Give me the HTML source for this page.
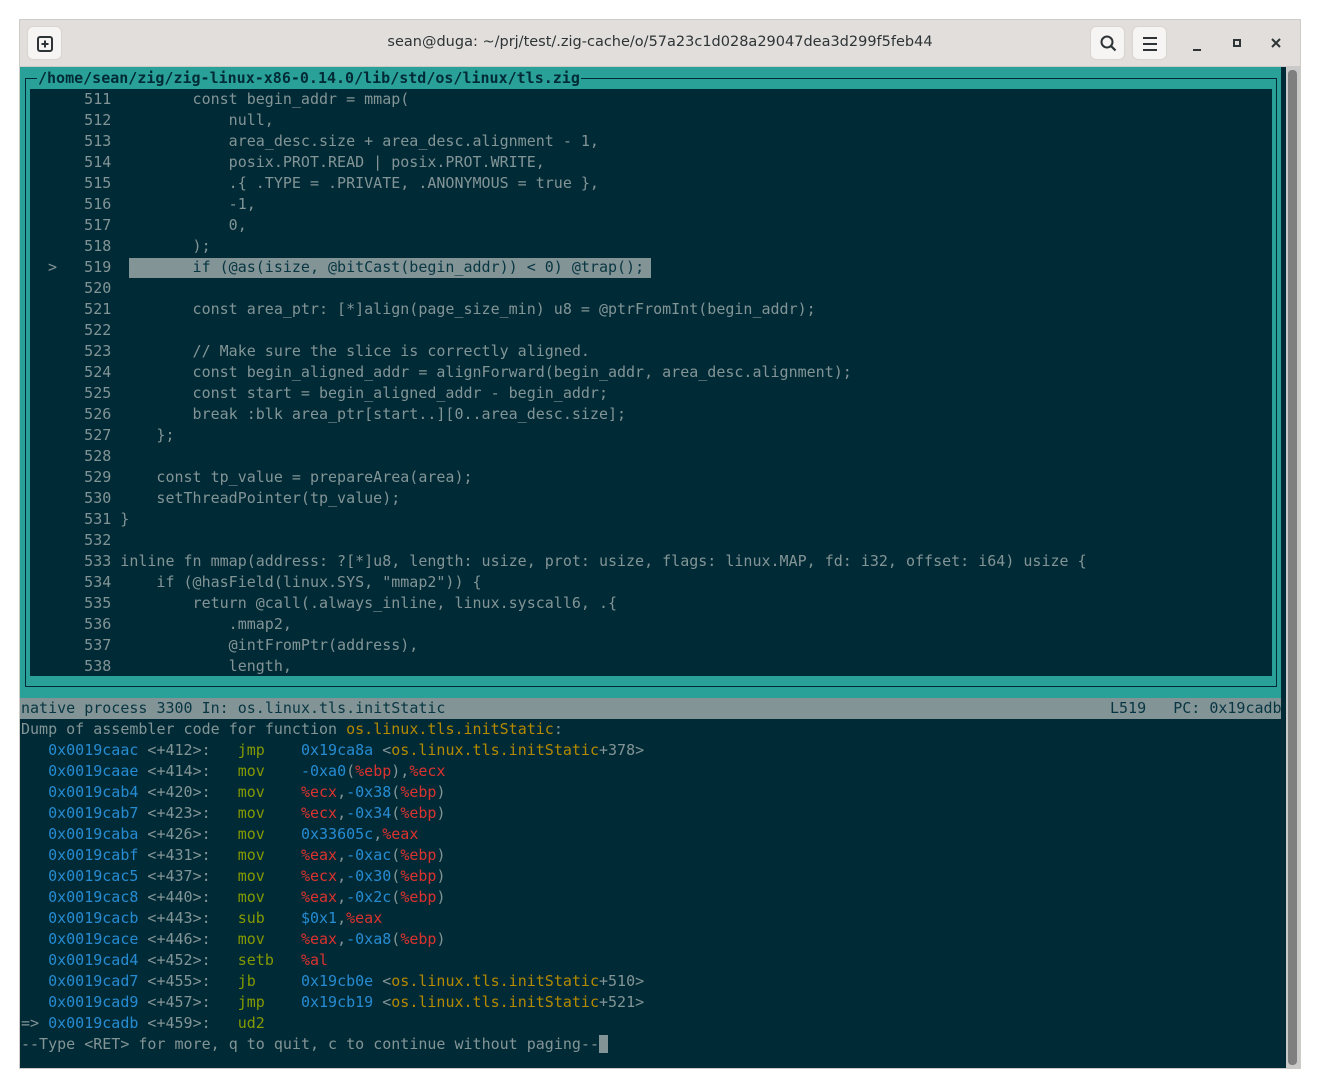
<!DOCTYPE html>
<html><head><meta charset="utf-8"><style>
*{margin:0;padding:0;box-sizing:border-box}
body{width:1320px;height:1088px;background:#fff;position:relative;overflow:hidden;font-family:"DejaVu Sans Mono","Liberation Mono",monospace}
.win{position:absolute;left:19px;top:19px;width:1282px;height:1050px;border:1px solid #cfcbc7;background:#002b36}
.tb{position:absolute;left:0;top:0;width:1280px;height:47px;background:#e1dedb;border-bottom:1px solid #cdc9c5}
.btn{position:absolute;width:35px;height:34px;background:#f6f5f4;border-radius:6px;border:1px solid #d8d4d0}
.title{position:absolute;left:0;width:1280px;top:14px;text-align:center;font:14.5px "DejaVu Sans","Liberation Sans",sans-serif;color:#2e3436}
pre{position:absolute;font-size:15px;line-height:21px;color:#839496;font-family:"DejaVu Sans Mono","Liberation Mono",monospace;white-space:pre}
.b{color:#268bd2}.y{color:#b58900}.g{color:#859900}.r{color:#dc322f}
</style></head><body>
<div class="win">
<div class="tb">
 <div class="btn" style="left:7px;top:6px"><svg width="35" height="34" viewBox="0 0 35 34"><rect x="10" y="10" width="14" height="14" rx="2" fill="none" stroke="#2e3436" stroke-width="2"/><path d="M17 13.5v7M13.5 17h7" stroke="#2e3436" stroke-width="2"/></svg></div>
 <div class="title">sean@duga: ~/prj/test/.zig-cache/o/57a23c1d028a29047dea3d299f5feb44</div>
 <div class="btn" style="left:1070px;top:6px"><svg width="35" height="34" viewBox="0 0 35 34"><circle cx="16" cy="15" r="5.5" fill="none" stroke="#2e3436" stroke-width="2"/><path d="M20 19l4.5 4.5" stroke="#2e3436" stroke-width="2.2"/></svg></div>
 <div class="btn" style="left:1112px;top:6px"><svg width="35" height="34" viewBox="0 0 35 34"><path d="M10 11h14M10 17h14M10 23h14" stroke="#2e3436" stroke-width="2"/></svg></div>
 <div style="position:absolute;left:1173px;top:29px;width:8px;height:2px;background:#2e3436"></div>
 <div style="position:absolute;left:1213px;top:19px;width:8px;height:8px;border:2px solid #2e3436"></div>
 <svg style="position:absolute;left:1251px;top:18px" width="10" height="10" viewBox="0 0 10 10"><path d="M1 1l8 8M9 1l-8 8" stroke="#2e3436" stroke-width="2"/></svg>
</div>
</div>
<!-- teal frame -->
<div style="position:absolute;left:20px;top:67px;width:1261px;height:631px;background:#2aa198"></div>
<div style="position:absolute;left:25px;top:78px;width:1252px;height:609px;border:1px solid #002b36"></div>
<div style="position:absolute;left:30px;top:89px;width:1242px;height:587px;background:#002b36"></div>
<div style="position:absolute;left:1281px;top:67px;width:5px;height:1001px;background:#002b36"></div>
<div style="position:absolute;left:1286px;top:67px;width:14px;height:1001px;background:#c9c9c9"></div>
<div style="position:absolute;left:1288px;top:70px;width:9px;height:995px;background:#7f7f7f;border-radius:4px"></div>
<div style="position:absolute;left:37px;top:68px;height:21px;padding:0 1px;background:#2aa198;font-size:15px;line-height:21px;font-weight:bold;color:#002b36;font-family:'DejaVu Sans Mono',monospace">/home/sean/zig/zig-linux-x86-0.14.0/lib/std/os/linux/tls.zig</div>
<div style="position:absolute;left:129px;top:258px;width:522px;height:20px;background:#839496"></div>
<pre style="left:30px;top:89px">      511         const begin_addr = mmap(
      512             null,
      513             area_desc.size + area_desc.alignment - 1,
      514             posix.PROT.READ | posix.PROT.WRITE,
      515             .{ .TYPE = .PRIVATE, .ANONYMOUS = true },
      516             -1,
      517             0,
      518         );
  >   519   <span style="color:#073642">      if (@as(isize, @bitCast(begin_addr)) &lt; 0) @trap();</span>
      520
      521         const area_ptr: [*]align(page_size_min) u8 = @ptrFromInt(begin_addr);
      522
      523         // Make sure the slice is correctly aligned.
      524         const begin_aligned_addr = alignForward(begin_addr, area_desc.alignment);
      525         const start = begin_aligned_addr - begin_addr;
      526         break :blk area_ptr[start..][0..area_desc.size];
      527     };
      528
      529     const tp_value = prepareArea(area);
      530     setThreadPointer(tp_value);
      531 }
      532
      533 inline fn mmap(address: ?[*]u8, length: usize, prot: usize, flags: linux.MAP, fd: i32, offset: i64) usize {
      534     if (@hasField(linux.SYS, "mmap2")) {
      535         return @call(.always_inline, linux.syscall6, .{
      536             .mmap2,
      537             @intFromPtr(address),
      538             length,</pre>
<div style="position:absolute;left:20px;top:698px;width:1261px;height:21px;background:#839496"></div>
<pre style="left:21px;top:698px;color:#073642">native process 3300 In: os.linux.tls.initStatic</pre>
<pre style="left:1110px;top:698px;color:#073642">L519   PC: 0x19cadb</pre>
<pre style="left:21px;top:719px">Dump of assembler code for function <span class="y">os.linux.tls.initStatic</span>:
   <span class="b">0x0019caac</span> &lt;+412&gt;:   <span class="g">jmp</span>    <span class="b">0x19ca8a</span> &lt;<span class="y">os.linux.tls.initStatic</span>+378&gt;
   <span class="b">0x0019caae</span> &lt;+414&gt;:   <span class="g">mov</span>    <span class="b">-0xa0</span>(<span class="r">%ebp</span>),<span class="r">%ecx</span>
   <span class="b">0x0019cab4</span> &lt;+420&gt;:   <span class="g">mov</span>    <span class="r">%ecx</span>,<span class="b">-0x38</span>(<span class="r">%ebp</span>)
   <span class="b">0x0019cab7</span> &lt;+423&gt;:   <span class="g">mov</span>    <span class="r">%ecx</span>,<span class="b">-0x34</span>(<span class="r">%ebp</span>)
   <span class="b">0x0019caba</span> &lt;+426&gt;:   <span class="g">mov</span>    <span class="b">0x33605c</span>,<span class="r">%eax</span>
   <span class="b">0x0019cabf</span> &lt;+431&gt;:   <span class="g">mov</span>    <span class="r">%eax</span>,<span class="b">-0xac</span>(<span class="r">%ebp</span>)
   <span class="b">0x0019cac5</span> &lt;+437&gt;:   <span class="g">mov</span>    <span class="r">%ecx</span>,<span class="b">-0x30</span>(<span class="r">%ebp</span>)
   <span class="b">0x0019cac8</span> &lt;+440&gt;:   <span class="g">mov</span>    <span class="r">%eax</span>,<span class="b">-0x2c</span>(<span class="r">%ebp</span>)
   <span class="b">0x0019cacb</span> &lt;+443&gt;:   <span class="g">sub</span>    <span class="b">$0x1</span>,<span class="r">%eax</span>
   <span class="b">0x0019cace</span> &lt;+446&gt;:   <span class="g">mov</span>    <span class="r">%eax</span>,<span class="b">-0xa8</span>(<span class="r">%ebp</span>)
   <span class="b">0x0019cad4</span> &lt;+452&gt;:   <span class="g">setb</span>   <span class="r">%al</span>
   <span class="b">0x0019cad7</span> &lt;+455&gt;:   <span class="g">jb</span>     <span class="b">0x19cb0e</span> &lt;<span class="y">os.linux.tls.initStatic</span>+510&gt;
   <span class="b">0x0019cad9</span> &lt;+457&gt;:   <span class="g">jmp</span>    <span class="b">0x19cb19</span> &lt;<span class="y">os.linux.tls.initStatic</span>+521&gt;
=&gt; <span class="b">0x0019cadb</span> &lt;+459&gt;:   <span class="g">ud2</span>
--Type &lt;RET&gt; for more, q to quit, c to continue without paging--<span style="background:#839496"> </span></pre>
</body></html>
